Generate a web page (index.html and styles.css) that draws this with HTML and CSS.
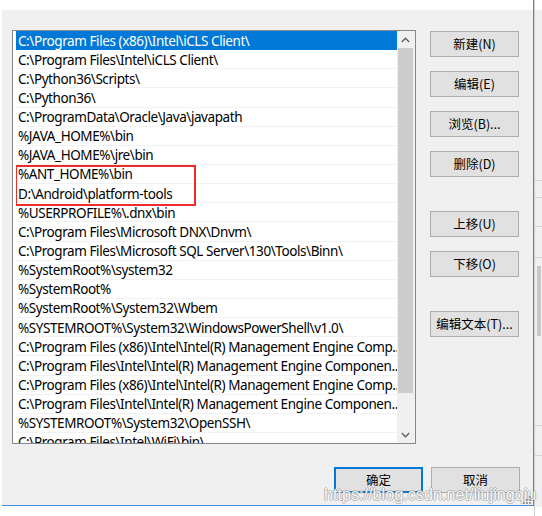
FILE: index.html
```html
<!DOCTYPE html>
<html lang="zh-CN">
<head>
<meta charset="utf-8">
<link rel="stylesheet" href="styles.css">
</head>
<body>
<div class="screen">
  <div class="dialog">
    <div class="titlestrip"></div>
    <div class="main">
      <div class="listbox">
        <div class="rows">
          <div class="row selected">C:\Program Files (x86)\Intel\iCLS Client\</div>
          <div class="row">C:\Program Files\Intel\iCLS Client\</div>
          <div class="row">C:\Python36\Scripts\</div>
          <div class="row">C:\Python36\</div>
          <div class="row">C:\ProgramData\Oracle\Java\javapath</div>
          <div class="row">%JAVA_HOME%\bin</div>
          <div class="row">%JAVA_HOME%\jre\bin</div>
          <div class="row">%ANT_HOME%\bin</div>
          <div class="row">D:\Android\platform-tools</div>
          <div class="row">%USERPROFILE%\.dnx\bin</div>
          <div class="row">C:\Program Files\Microsoft DNX\Dnvm\</div>
          <div class="row">C:\Program Files\Microsoft SQL Server\130\Tools\Binn\</div>
          <div class="row">%SystemRoot%\system32</div>
          <div class="row">%SystemRoot%</div>
          <div class="row">%SystemRoot%\System32\Wbem</div>
          <div class="row">%SYSTEMROOT%\System32\WindowsPowerShell\v1.0\</div>
          <div class="row">C:\Program Files (x86)\Intel\Intel(R) Management Engine Comp...</div>
          <div class="row">C:\Program Files\Intel\Intel(R) Management Engine Componen...</div>
          <div class="row">C:\Program Files (x86)\Intel\Intel(R) Management Engine Comp...</div>
          <div class="row">C:\Program Files\Intel\Intel(R) Management Engine Componen...</div>
          <div class="row">%SYSTEMROOT%\System32\OpenSSH\</div>
          <div class="row">C:\Program Files\Intel\WiFi\bin\</div>
          <div class="highlight"></div>
        </div>
        <div class="scrollbar">
          <div class="arrow"><svg width="9" height="6" viewBox="0 0 9 6"><polyline points="0.8,5 4.5,1.3 8.2,5" fill="none" stroke="#606060" stroke-width="1.4"/></svg></div>
          <div class="track"><div class="thumb"></div></div>
          <div class="arrow"><svg width="9" height="6" viewBox="0 0 9 6"><polyline points="0.8,1 4.5,4.7 8.2,1" fill="none" stroke="#606060" stroke-width="1.4"/></svg></div>
        </div>
      </div>
      <div class="side">
        <button class="btn">新建(N)</button>
        <button class="btn">编辑(E)</button>
        <button class="btn">浏览(B)...</button>
        <button class="btn">删除(D)</button>
        <button class="btn sep">上移(U)</button>
        <button class="btn">下移(O)</button>
        <button class="btn sep">编辑文本(T)...</button>
      </div>
    </div>
    <div class="footer">
      <button class="btn default">确定</button>
      <button class="btn">取消</button>
    </div>
    <div class="watermark">https://blog.csdn.net/liujingqiu</div>
    <svg class="grip" width="9" height="9" viewBox="0 0 9 9">
      <g fill="#9a9a9a">
        <rect x="7" y="1" width="2" height="2"/>
        <rect x="4" y="4" width="2" height="2"/><rect x="7" y="4" width="2" height="2"/>
        <rect x="1" y="7" width="2" height="2"/><rect x="4" y="7" width="2" height="2"/><rect x="7" y="7" width="2" height="2"/>
      </g>
    </svg>
  </div>
  <div class="behind"></div>
</div>
</body>
</html>
```

FILE: styles.css
```css
* { box-sizing: border-box; }
html, body { margin: 0; padding: 0; background: #ffffff; }
body { width: 542px; height: 516px; overflow: hidden; }

.screen {
  display: flex;
  align-items: flex-start;
  width: 542px;
  height: 516px;
  padding-left: 2px;
}

.dialog {
  position: relative;
  width: 532px;
  height: 506px;
  background: #f0f0f0;
  border-right: 1px solid #3d8ee0;
  border-bottom: 1px solid #3d8ee0;
  display: flex;
  flex-direction: column;
}

.titlestrip { height: 10px; background: #ffffff; flex: none; }

.main {
  display: flex;
  align-items: flex-start;
  padding: 20px 0 0 10px;
  gap: 14px;
}

.listbox {
  width: 404px;
  height: 414px;
  border: 1px solid #828790;
  background: #ffffff;
  display: flex;
  padding-left: 3px;
}

.rows {
  position: relative;
  width: 381px;
  height: 100%;
  overflow: hidden;
}

.row {
  height: 19.15px;
  line-height: 17px;
  padding: 1.5px 0 0 2px;
  font-family: "Noto Sans", "Noto Sans CJK SC", sans-serif;
  font-size: 13.5px;
  letter-spacing: -0.42px;
  color: #000000;
  white-space: nowrap;
  border-bottom: 1px solid #f2f2f2;
}

.row.selected {
  background: #0078d7;
  color: #ffffff;
  border-bottom-color: #0078d7;
}

.highlight {
  position: absolute;
  left: -1px;
  top: 134px;
  width: 181px;
  height: 41px;
  border: 2px solid #ee2c2c;
}

.scrollbar {
  width: 18px;
  height: 100%;
  background: #f0f0f0;
  display: flex;
  flex-direction: column;
  padding-right: 1px;
}

.arrow {
  height: 17px;
  flex: none;
  display: flex;
  align-items: center;
  justify-content: center;
}

.track { flex: 1; }

.thumb {
  margin: 0 1px;
  height: 345px;
  background: #cdcdcd;
}

.side {
  width: 89px;
  display: flex;
  flex-direction: column;
  gap: 14px;
  padding-top: 1px;
}

.btn {
  width: 89px;
  height: 26px;
  margin: 0;
  padding: 0;
  background: #e1e1e1;
  border: 1px solid #adadad;
  font-family: "Noto Sans CJK SC", "Noto Sans", sans-serif;
  font-size: 12.5px;
  color: #000000;
  line-height: 24px;
  text-align: center;
}

.btn.sep { margin-top: 20px; }

.btn.default {
  border-color: #0078d7;
  box-shadow: inset 0 0 0 1px #0078d7;
}

.footer {
  display: flex;
  justify-content: flex-end;
  gap: 8px;
  padding: 23px 13px 0 0;
}

.watermark {
  position: absolute;
  left: 322px;
  top: 485px;
  font-family: "Liberation Sans", Arial, sans-serif;
  font-size: 16.2px;
  color: rgba(255, 255, 255, 0.92);
  text-shadow:
    1px 0 0 rgba(150, 150, 150, 0.55),
    -1px 0 0 rgba(150, 150, 150, 0.55),
    0 1px 0 rgba(150, 150, 150, 0.55),
    0 -1px 0 rgba(150, 150, 150, 0.55);
  white-space: nowrap;
  pointer-events: none;
}

.grip {
  position: absolute;
  right: 2px;
  bottom: 1px;
}

.behind {
  flex: 1;
  height: 516px;
  background:
    linear-gradient(#c8c8c8, #c8c8c8) 2px 266px / 4px 70px no-repeat,
    linear-gradient(#d4d4d4, #d4d4d4) 0 180px / 100% 1px no-repeat,
    linear-gradient(#d4d4d4, #d4d4d4) 0 197px / 100% 1px no-repeat,
    linear-gradient(#d4d4d4, #d4d4d4) 0 226px / 100% 1px no-repeat,
    linear-gradient(#d4d4d4, #d4d4d4) 0 257px / 100% 1px no-repeat,
    linear-gradient(#d4d4d4, #d4d4d4) 0 425px / 100% 1px no-repeat,
    linear-gradient(#d4d4d4, #d4d4d4) 0 455px / 100% 1px no-repeat,
    linear-gradient(#ffffff, #ffffff) 0 0 / 100% 10px no-repeat,
    linear-gradient(#ffffff, #ffffff) 0 507px / 100% 9px no-repeat,
    #f0f0f0;
  border-left: 1px solid #cfcfcf;
}
```
